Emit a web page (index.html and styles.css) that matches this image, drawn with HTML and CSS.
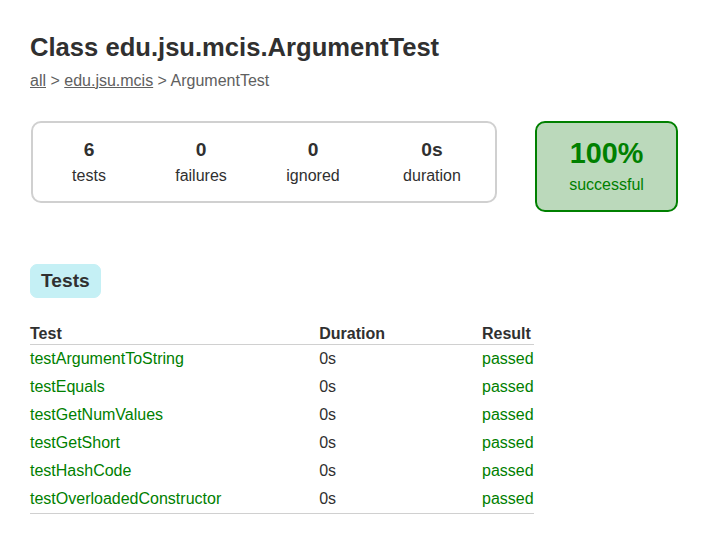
FILE: index.html
```
<!DOCTYPE html>
<html lang="en">
<head>
<meta charset="utf-8">
<title>Test results - Class edu.jsu.mcis.ArgumentTest</title>
<link rel="stylesheet" href="styles.css">
</head>
<body>
<div class="content">
  <h1 class="title">Class edu.jsu.mcis.ArgumentTest</h1>
  <div class="breadcrumbs">
    <a href="#">all</a> &gt; <a href="#">edu.jsu.mcis</a> &gt; ArgumentTest
  </div>
  <div class="summary">
    <div class="summary-group">
      <div class="info-box">
        <div class="counter">6</div>
        <p class="label">tests</p>
      </div>
      <div class="info-box">
        <div class="counter">0</div>
        <p class="label">failures</p>
      </div>
      <div class="info-box">
        <div class="counter">0</div>
        <p class="label">ignored</p>
      </div>
      <div class="info-box info-box-duration">
        <div class="counter">0s</div>
        <p class="label">duration</p>
      </div>
    </div>
    <div class="success-rate">
      <div class="percent">100%</div>
      <p class="label">successful</p>
    </div>
  </div>
  <ul class="tab-links">
    <li class="tab-link selected">Tests</li>
  </ul>
  <div class="tab">
    <table class="tests">
      <thead>
        <tr><th>Test</th><th class="col-duration">Duration</th><th class="col-result">Result</th></tr>
      </thead>
      <tbody>
        <tr><td class="success">testArgumentToString</td><td class="col-duration">0s</td><td class="col-result success">passed</td></tr>
        <tr><td class="success">testEquals</td><td class="col-duration">0s</td><td class="col-result success">passed</td></tr>
        <tr><td class="success">testGetNumValues</td><td class="col-duration">0s</td><td class="col-result success">passed</td></tr>
        <tr><td class="success">testGetShort</td><td class="col-duration">0s</td><td class="col-result success">passed</td></tr>
        <tr><td class="success">testHashCode</td><td class="col-duration">0s</td><td class="col-result success">passed</td></tr>
        <tr><td class="success">testOverloadedConstructor</td><td class="col-duration">0s</td><td class="col-result success">passed</td></tr>
      </tbody>
    </table>
  </div>
</div>
</body>
</html>
```
FILE: styles.css
```
html, body {
  margin: 0;
  padding: 0;
  background: #ffffff;
}
body {
  font-family: "Liberation Sans", Arial, sans-serif;
  font-size: 16px;
  line-height: 1.125;
  color: #303030;
}
a, a:visited {
  color: #303030;
}
.content {
  padding: 33px 30px 30px 30px;
}
.title {
  font-size: 25.6px;
  font-weight: bold;
  margin: 0 0 10px 0;
  white-space: nowrap;
}
.breadcrumbs, .breadcrumbs a {
  color: #606060;
}
.summary {
  display: flex;
  align-items: flex-start;
  margin-top: 31px;
}
.summary-group {
  display: flex;
  border: 2px solid #d0d0d0;
  border-radius: 10px;
  margin-left: 1px;
}
.info-box {
  width: 112px;
  padding: 16px 0 16px 0;
  text-align: center;
}
.info-box-duration {
  width: 126px;
}
.label {
  margin: 0;
}
.counter {
  font-size: 19.2px;
  font-weight: bold;
  margin-bottom: 7px;
}
.success-rate {
  width: 139px;
  margin-left: 38px;
  padding: 14px 0 16px 0;
  text-align: center;
  border: 2px solid #008000;
  border-radius: 10px;
  background: #bbd9bb;
  color: #008000;
}
.percent {
  font-size: 28.8px;
  font-weight: bold;
  margin-bottom: 7px;
}
.tab-links {
  list-style: none;
  margin: 52px 0 0 0;
  padding: 0;
  display: flex;
}
.tab-link {
  padding: 5px 10px;
  border: 1px solid #c5f0f5;
  border-radius: 7px;
  background: #c5f0f5;
  font-size: 19.2px;
  font-weight: bold;
}
.tab {
  margin-top: 26px;
}
.tests {
  border-collapse: collapse;
  min-width: 350px;
  border-bottom: 1px solid #d0d0d0;
}
.tests th {
  text-align: left;
  white-space: nowrap;
  padding: 1px 0 1px 96px;
  border-bottom: 1px solid #d0d0d0;
  font-weight: bold;
}
.tests td {
  white-space: nowrap;
  padding: 5px 0 5px 96px;
}
.tests th.col-duration,
.tests td.col-duration {
  padding-left: 98px;
}
.tests th.col-result,
.tests td.col-result {
  padding-left: 97px;
}
.tests th:first-child,
.tests td:first-child {
  padding-left: 0;
}
.success {
  color: #008000;
}
```
